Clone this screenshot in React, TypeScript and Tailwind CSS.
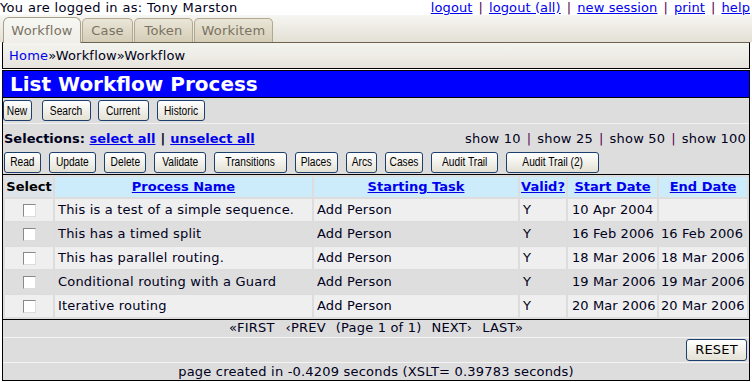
import React from "react";

const Btn = ({ w, label, ml = "" }: { w: string; label: string; ml?: string }) => (
  <div
    className={`${w} ${ml} h-[21px] shrink-0 rounded-[3px] border border-[#1c3f6e] bg-gradient-to-b from-white to-[#e4e1d4] flex items-center justify-center text-[12px] tracking-normal text-black font-['Liberation_Sans',Arial,sans-serif] overflow-hidden`}
  >
    <span className="inline-block scale-x-[0.85] whitespace-nowrap">{label}</span>
  </div>
);

const Check = () => (
  <span className="inline-block w-[13px] h-[13px] bg-white border-t border-l border-[#8a8a8a] border-r border-b border-r-[#dcdcdc] border-b-[#dcdcdc] align-middle" />
);

const rows = [
  ["This is a test of a simple sequence.", "Add Person", "Y", "10 Apr 2004", ""],
  ["This has a timed split", "Add Person", "Y", "16 Feb 2006", "16 Feb 2006"],
  ["This has parallel routing.", "Add Person", "Y", "18 Mar 2006", "18 Mar 2006"],
  ["Conditional routing with a Guard", "Add Person", "Y", "19 Mar 2006", "19 Mar 2006"],
  ["Iterative routing", "Add Person", "Y", "20 Mar 2006", "20 Mar 2006"],
];

const Sep = () => <span className="text-[#5a0050] mx-[6px]">|</span>;

export default function App() {
  return (
    <div className="w-[752px] h-[382px] overflow-hidden bg-white font-['DejaVu_Sans',Verdana,sans-serif] text-[13px] tracking-[0.2px] text-[#000020]">
      {/* top line */}
      <div className="flex justify-between h-[15px] leading-[15px] pr-[2px]">
        <div className="tracking-[0.35px]">You are logged in as: Tony Marston</div>
        <div className="flex tracking-[0.1px]">
          <a className="text-[#0000ee] underline">logout</a>
          <Sep />
          <a className="text-[#0000ee] underline">logout (all)</a>
          <Sep />
          <a className="text-[#0000ee] underline">new session</a>
          <Sep />
          <a className="text-[#0000ee] underline">print</a>
          <Sep />
          <a className="text-[#0000ee] underline">help</a>
        </div>
      </div>
      {/* tab bar */}
      <div className="h-[27px] bg-gradient-to-b from-[#f6f6f2] to-[#e3e0d5] flex items-end pl-[3px] text-[#7a7262]">
        <div className="relative z-10 -mb-px w-[78px] h-[26px] rounded-t-[6px] border border-b-0 border-[#aaa08a] bg-gradient-to-b from-[#f7f7f3] to-[#efeee8] flex items-center justify-center">
          Workflow
        </div>
        <div className="w-[51px] ml-px h-[24px] rounded-t-[5px] border border-b-0 border-[#b2a88f] bg-gradient-to-b from-[#eae6d8] to-[#d4cdb6] flex items-center justify-center">
          Case
        </div>
        <div className="w-[59px] ml-px h-[24px] rounded-t-[5px] border border-b-0 border-[#b2a88f] bg-gradient-to-b from-[#eae6d8] to-[#d4cdb6] flex items-center justify-center">
          Token
        </div>
        <div className="w-[79px] ml-px h-[24px] rounded-t-[5px] border border-b-0 border-[#b2a88f] bg-gradient-to-b from-[#eae6d8] to-[#d4cdb6] flex items-center justify-center">
          Workitem
        </div>
      </div>
      {/* breadcrumb */}
      <div className="mx-[2px] h-[27px] border-t border-t-[#6f6250] border-x border-b border-black bg-gradient-to-b from-[#f4f4ef] to-[#e6e4dc] pl-[6px] leading-[25px]">
        <a className="text-[#0000ee]">Home</a>»Workflow»Workflow
      </div>
      {/* main box */}
      <div className="mt-px mx-[2px] border border-black bg-[#dddddd]">
        <div className="h-[27px] bg-[#0000ff] border-b border-black text-white font-bold text-[20px] tracking-normal leading-[26px] pl-[7px]">
          List Workflow Process
        </div>
        <div className="h-[26px] flex items-center border-b border-[#f2f2f2]">
          <Btn w="w-[29px]" label="New" />
          <Btn w="w-[49px]" ml="ml-[10px]" label="Search" />
          <Btn w="w-[51px]" ml="ml-[7px]" label="Current" />
          <Btn w="w-[48px]" ml="ml-[8px]" label="Historic" />
        </div>
        <div className="h-[26px] flex items-center justify-between pl-[1px] pr-[3px] pt-[3px]">
          <div className="font-bold tracking-normal">
            Selections: <a className="text-[#0000ee] underline">select all</a>
            <span className="mx-[5px]">|</span>
            <a className="text-[#0000ee] underline">unselect all</a>
          </div>
          <div className="flex">
            <span>show 10</span>
            <Sep />
            <span>show 25</span>
            <Sep />
            <span>show 50</span>
            <Sep />
            <span>show 100</span>
          </div>
        </div>
        <div className="h-[25px] flex items-center gap-[8px] pl-[1px] border-b border-black">
          <Btn w="w-[37px]" label="Read" />
          <Btn w="w-[47px]" label="Update" />
          <Btn w="w-[42px]" label="Delete" />
          <Btn w="w-[52px]" label="Validate" />
          <Btn w="w-[73px]" label="Transitions" />
          <Btn w="w-[43px]" label="Places" />
          <Btn w="w-[31px]" label="Arcs" />
          <Btn w="w-[38px]" label="Cases" />
          <Btn w="w-[67px]" label="Audit Trail" />
          <Btn w="w-[93px]" label="Audit Trail (2)" />
        </div>
        <table className="w-full table-fixed border-separate border-spacing-[2px] border-b border-black">
          <colgroup>
            <col className="w-[48px]" />
            <col className="w-[257px]" />
            <col className="w-[204px]" />
            <col className="w-[46px]" />
            <col className="w-[89px]" />
            <col />
          </colgroup>
          <thead>
            <tr className="h-[19px] font-bold">
              <th className="bg-[#dde4ea] text-center p-0 font-bold text-black tracking-normal">Select</th>
              {["Process Name", "Starting Task", "Valid?", "Start Date", "End Date"].map((h) => (
                <th key={h} className="bg-[#ccecfc] text-center p-0 whitespace-nowrap tracking-normal">
                  <a className="text-[#0000ee] underline">{h}</a>
                </th>
              ))}
            </tr>
          </thead>
          <tbody>
            {rows.map((r, i) => (
              <tr key={i} className={`h-[22px] ${i % 2 === 0 ? "bg-[#efefef]" : "bg-[#dedede]"}`}>
                <td className="text-center p-0 leading-none">
                  <Check />
                </td>
                <td className="p-0 pl-[3px] whitespace-nowrap">{r[0]}</td>
                <td className="p-0 pl-[3px] whitespace-nowrap">{r[1]}</td>
                <td className="p-0 pl-[3px]">{r[2]}</td>
                <td className="p-0 pl-[4px] whitespace-nowrap tracking-[0.1px]">{r[3]}</td>
                <td className="p-0 pl-[2px] whitespace-nowrap tracking-[0.1px]">{r[4]}</td>
              </tr>
            ))}
          </tbody>
        </table>
        <div className="h-[18px] border-b border-[#f4f4f4] flex items-center justify-center">
          <span>«FIRST</span>
          <span className="ml-[11px]">‹PREV</span>
          <span className="ml-[10px]">(Page 1 of 1)</span>
          <span className="ml-[10px]">NEXT›</span>
          <span className="ml-[10px]">LAST»</span>
        </div>
        <div className="h-[25px] border-b border-[#f4f4f4] flex items-center justify-end pr-[2px]">
          <div className="w-[61px] h-[22px] rounded-[3px] border border-[#1c3f6e] bg-gradient-to-b from-white to-[#e4e1d4] flex items-center justify-center text-[13px] text-black">
            RESET
          </div>
        </div>
        <div className="h-[17px] leading-[17px] text-center">
          page created in -0.4209 seconds (XSLT= 0.39783 seconds)
        </div>
      </div>
    </div>
  );
}
